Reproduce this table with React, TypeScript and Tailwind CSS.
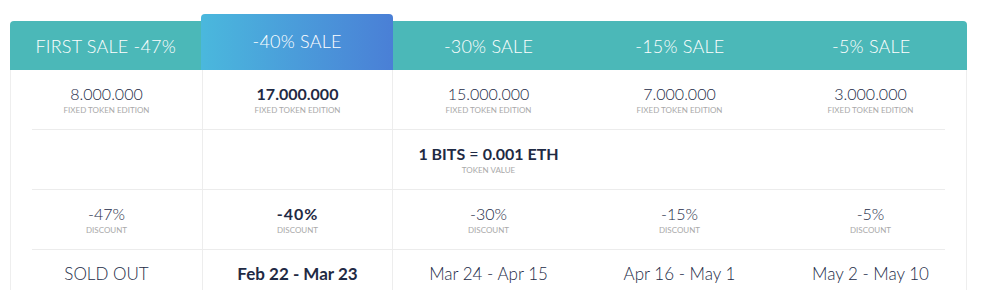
import React from "react";

const tiers = [
  { title: "FIRST SALE -47%", amount: "8.000.000", discount: "-47%", dates: "SOLD OUT", active: false },
  { title: "-40% SALE", amount: "17.000.000", discount: "-40%", dates: "Feb 22 - Mar 23", active: true },
  { title: "-30% SALE", amount: "15.000.000", discount: "-30%", dates: "Mar 24 - Apr 15", active: false },
  { title: "-15% SALE", amount: "7.000.000", discount: "-15%", dates: "Apr 16 - May 1", active: false },
  { title: "-5% SALE", amount: "3.000.000", discount: "-5%", dates: "May 2 - May 10", active: false },
];

const font = { fontFamily: "Lato, 'Noto Sans', sans-serif" };

function Cell({ active, children }: { active: boolean; children?: React.ReactNode }) {
  return (
    <div
      className={`h-[59px] flex flex-col items-center justify-center ${
        active ? "border-x border-[#ededed]" : ""
      }`}
    >
      {children}
    </div>
  );
}

function Sep() {
  return <div className="mx-[21px] h-px bg-[#ececec]" />;
}

export default function App() {
  return (
    <div className="w-[1000px] h-[290px] bg-white overflow-hidden" style={font}>
      <div className="ml-[10px] mt-[21px] w-[957px]">
        {/* header */}
        <div className="grid grid-cols-5 h-[49px] bg-[#4bb8b8] rounded-t">
          {tiers.map((t) => (
            <div
              key={t.title}
              className={`flex items-center justify-center text-white text-[18px] font-light tracking-[0.2px] ${
                t.active
                  ? "-mt-[7px] h-[56px] rounded-t bg-gradient-to-r from-[#4ab8dd] to-[#4a7fd6] pb-[2px]"
                  : "pt-[1px]"
              }`}
            >
              {t.title}
            </div>
          ))}
        </div>

        {/* body */}
        <div className="border-x border-[#eeeeee]">
          <div className="grid grid-cols-5">
            {tiers.map((t) => (
              <Cell key={t.title} active={t.active}>
                <span
                  className={`text-[16px] leading-[20px] ${
                    t.active ? "font-bold text-[#1f2a44]" : "font-light text-[#232b47]"
                  }`}
                >
                  {t.amount}
                </span>
                <span className="text-[8px] leading-[10px] text-[#a9a9a9] uppercase mt-[1px]">
                  Fixed token edition
                </span>
              </Cell>
            ))}
          </div>
          <Sep />
          <div className="grid grid-cols-5">
            {tiers.map((t, i) => (
              <Cell key={t.title} active={t.active}>
                {i === 2 && (
                  <>
                    <span className="whitespace-nowrap text-[16px] leading-[20px] text-[#1f2a44]">
                      <b className="font-bold">1 BITS</b> = <b className="font-bold">0.001 ETH</b>
                    </span>
                    <span className="text-[8px] leading-[10px] text-[#a9a9a9] uppercase mt-[1px]">
                      Token value
                    </span>
                  </>
                )}
              </Cell>
            ))}
          </div>
          <Sep />
          <div className="grid grid-cols-5">
            {tiers.map((t) => (
              <Cell key={t.title} active={t.active}>
                <span
                  className={`text-[16px] leading-[20px] ${
                    t.active ? "font-bold text-[#1f2a44] tracking-[1px]" : "font-light text-[#232b47]"
                  }`}
                >
                  {t.discount}
                </span>
                <span className="text-[8px] leading-[10px] text-[#a9a9a9] uppercase mt-[1px]">
                  Discount
                </span>
              </Cell>
            ))}
          </div>
          <Sep />
          <div className="grid grid-cols-5">
            {tiers.map((t) => (
              <div
                key={t.title}
                className={`h-[59px] flex justify-center pt-[13px] ${
                  t.active ? "border-x border-[#ededed]" : ""
                }`}
              >
                <span
                  className={`text-[17px] leading-[22px] ${
                    t.active ? "font-bold text-[#1f2a44]" : "font-light text-[#232b47]"
                  }`}
                >
                  {t.dates}
                </span>
              </div>
            ))}
          </div>
        </div>
      </div>
    </div>
  );
}
